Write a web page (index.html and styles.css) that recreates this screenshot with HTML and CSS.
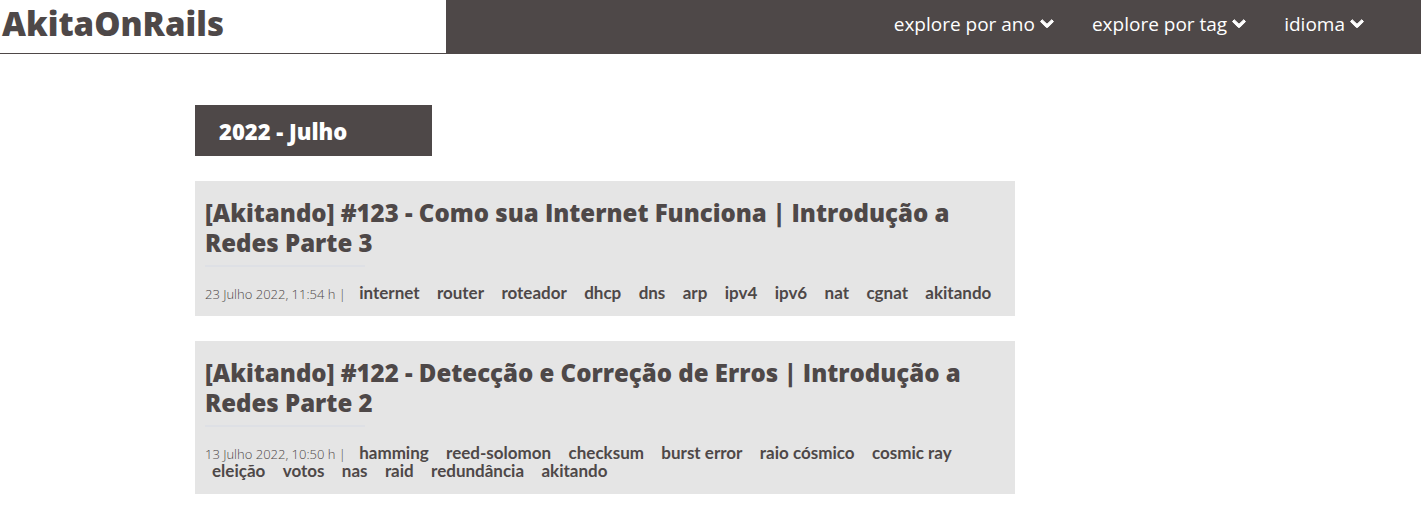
FILE: index.html
```html
<!DOCTYPE html>
<html lang="pt-BR">
<head>
<meta charset="utf-8">
<title>AkitaOnRails</title>
<link rel="stylesheet" href="styles.css">
</head>
<body>
<header class="header">
  <h1 class="brand"><a href="#">AkitaOnRails</a></h1>
  <nav class="nav">
    <button class="nav-item" type="button">explore por ano <svg class="chevron" viewBox="0 0 14 9" aria-hidden="true"><path d="M0.5 2.6 L2.2 0.7 L7 5.2 L11.8 0.7 L13.5 2.6 L7.5 8.6 H6.5 Z"/></svg></button>
    <button class="nav-item" type="button">explore por tag <svg class="chevron" viewBox="0 0 14 9" aria-hidden="true"><path d="M0.5 2.6 L2.2 0.7 L7 5.2 L11.8 0.7 L13.5 2.6 L7.5 8.6 H6.5 Z"/></svg></button>
    <button class="nav-item" type="button">idioma <svg class="chevron" viewBox="0 0 14 9" aria-hidden="true"><path d="M0.5 2.6 L2.2 0.7 L7 5.2 L11.8 0.7 L13.5 2.6 L7.5 8.6 H6.5 Z"/></svg></button>
  </nav>
</header>
<main class="content">
  <h2 class="month">2022 - Julho</h2>
  <article class="post">
    <h3 class="title"><a href="#">[Akitando] #123 - Como sua Internet Funciona | Introdução a Redes Parte 3</a></h3>
    <p class="meta"><span class="date">23 Julho 2022, 11:54 h |</span>
      <a class="tag" href="#">internet</a> <a class="tag" href="#">router</a> <a class="tag" href="#">roteador</a> <a class="tag" href="#">dhcp</a> <a class="tag" href="#">dns</a> <a class="tag" href="#">arp</a> <a class="tag" href="#">ipv4</a> <a class="tag" href="#">ipv6</a> <a class="tag" href="#">nat</a> <a class="tag" href="#">cgnat</a> <a class="tag" href="#">akitando</a></p>
  </article>
  <article class="post">
    <h3 class="title"><a href="#">[Akitando] #122 - Detecção e Correção de Erros | Introdução a Redes Parte 2</a></h3>
    <p class="meta"><span class="date">13 Julho 2022, 10:50 h |</span>
      <a class="tag" href="#">hamming</a> <a class="tag" href="#">reed-solomon</a> <a class="tag" href="#">checksum</a> <a class="tag" href="#">burst error</a> <a class="tag" href="#">raio cósmico</a> <a class="tag" href="#">cosmic ray</a> <a class="tag" href="#">eleição</a> <a class="tag" href="#">votos</a> <a class="tag" href="#">nas</a> <a class="tag" href="#">raid</a> <a class="tag" href="#">redundância</a> <a class="tag" href="#">akitando</a></p>
  </article>
</main>
</body>
</html>
```
FILE: styles.css
```css
* { box-sizing: border-box; }
body { margin: 0; background: #fff; color: #4e4848; font-family: "Open Sans", "Noto Sans", sans-serif; }
a { color: inherit; text-decoration: none; }
h1, h2, h3, p { margin: 0; }
.header { display: flex; background: #4e4848; border-bottom: 1px solid #4e4848; }
.brand { flex: 0 0 446px; padding: 0 0 6px 2px; background: #fff; font-size: 33px; line-height: 47px; font-weight: 800; }
.nav { flex: 1; display: flex; justify-content: flex-end; align-items: center; gap: 38px; padding: 0 57px 6px 0; }
.nav-item { display: flex; align-items: center; gap: 5px; padding: 0; border: 0; background: none; color: #fff; font: 19px/26px "Open Sans", "Noto Sans", sans-serif; }
.chevron { width: 14px; height: 9px; fill: #fff; stroke: #fff; stroke-width: 1; stroke-linejoin: round; }
.content { max-width: 1015px; padding: 51px 0 24px 195px; }
.month { width: 237px; margin-bottom: 25px; padding: 11px 24px 10px; background: #4e4848; color: #fff; font-size: 22px; line-height: 30px; font-weight: 800; }
.post { padding: 17px 10px 14px; background: #e5e5e5; }
.post + .post { margin-top: 25px; }
.title { font-size: 24px; line-height: 30px; font-weight: 800; }
.title::after { content: ""; display: block; width: 160px; height: 2px; margin-top: 7px; background: #dee0e5; }
.meta { margin-top: 17px; font-family: Lato, sans-serif; font-size: 17px; line-height: 18px; }
.date { margin-right: 2px; font-family: "Open Sans", sans-serif; font-size: 13px; line-height: 1; font-weight: 300; }
.tag { margin: 0 6px 0 7px; font-weight: 700; white-space: nowrap; }
```
